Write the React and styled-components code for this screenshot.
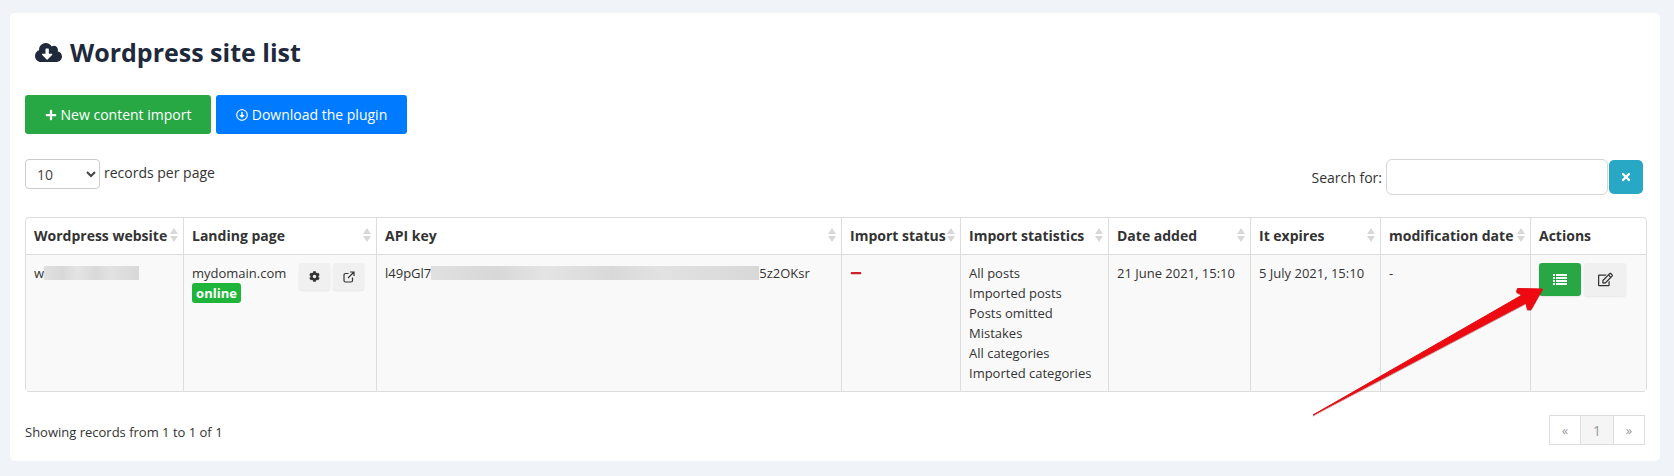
import React from "react";
import styled, { createGlobalStyle } from "styled-components";
import { FaCloudDownloadAlt, FaPlus, FaRegArrowAltCircleDown, FaCog, FaTimes, FaRegEdit, FaMinus } from "react-icons/fa";

const Global = createGlobalStyle`
  html, body { margin: 0; padding: 0; background: #f0f3f8; height: 476px; overflow: hidden; }
  body { font-family: "Open Sans", "Noto Sans", sans-serif; color: #333; font-size: 14px; }
  * { box-sizing: border-box; }
`;
const Page = styled.div`padding: 13px 14px 15px 10px;`;
const Card = styled.main`
  position: relative; background: #fff; border-radius: 5px; height: 448px;
  padding: 25px 15px 16px 15px;
`;
const Title = styled.h1`
  margin: 0 0 28px 10px; height: 29px; display: flex; align-items: center; gap: 8px;
  font-size: 25px; line-height: 29px; font-weight: 700; color: #1e293b;
`;
const Toolbar = styled.div`display: flex; gap: 5px; margin-bottom: 25px;`;
const ActionButton = styled.button`
  width: ${p => p.$w}px; height: 39px; border: 0; border-radius: 3px; color: #fff;
  background: ${p => p.$bg}; font: 14px "Open Sans", sans-serif;
  display: flex; align-items: center; justify-content: center; gap: 4px;
`;
const Controls = styled.div`
  display: flex; justify-content: space-between; align-items: flex-start;
  height: 36px; margin: 0 2px 22px 0;
`;
const PerPage = styled.label`display: flex; align-items: flex-start; gap: 4px; line-height: 28px;`;
const Select = styled.select`
  width: 75px; height: 30px; border: 1px solid #ccc; border-radius: 4px; background: #fff;
  padding-left: 7px; font: 14px "Open Sans", sans-serif; color: #444;
`;
const SearchBox = styled.label`display: flex; align-items: center; height: 36px; gap: 4px;`;
const SearchInput = styled.input`
  width: 222px; height: 36px; border: 1px solid #d5d5d5; border-radius: 6px; background: #fff;
`;
const ClearButton = styled.button`
  width: 34px; height: 34px; margin-left: -3px; border: 0; border-radius: 5px; background: #28a8c4; color: #fff;
  display: flex; align-items: center; justify-content: center; font-size: 12px;
`;
const Table = styled.table`
  width: 1620px; table-layout: fixed; border-collapse: separate; border-spacing: 0;
  border: 1px solid #ddd; border-radius: 4px;
`;
const Th = styled.th`
  height: 37px; padding: 0 8px 2px; text-align: left; font-size: 14px; font-weight: 700; color: #333;
  border-bottom: 1px solid #ddd; border-right: 1px solid #ddd; white-space: nowrap;
  &:last-child { border-right: 0; }
`;
const ThInner = styled.div`display: flex; align-items: center; justify-content: space-between;`;
const Sort = styled.svg`width: 8px; height: 14px; flex: none; margin-right: -3px;`;
const Td = styled.td`
  vertical-align: top; padding: 8px 8px 8px; font-size: 13px; line-height: 20px; background: #f9f9f9; white-space: nowrap;
  border-right: 1px solid #ddd;
  &:last-child { border-right: 0; }
`;
const Redacted = styled.span`
  display: inline-block; width: ${p => p.$w}px; height: 14px; vertical-align: -2px;
  background: linear-gradient(90deg, #e0e0e0 0%, #d8d8d8 20%, #e4e4e4 35%, #d9d9d9 55%, #e2e2e2 70%, #d8d8d8 100%);
`;
const Landing = styled.div`display: flex; justify-content: space-between; padding-right: 4px;`;
const Badge = styled.span`
  display: block; width: 49px; height: 20px; border-radius: 3px; background: #1fb53a; color: #fff;
  font-size: 13px; font-weight: 700; line-height: 20px; text-align: center;
`;
const Buttons = styled.div`display: flex; gap: 3px;`;
const IconButton = styled.button`
  width: ${p => p.$w}px; height: ${p => p.$h}px; border: 0; border-radius: 3px; padding: 0;
  background: ${p => (p.$green ? "#28a745" : "#f0f0f0")}; color: ${p => (p.$green ? "#fff" : "#333")};
  box-shadow: 0 1px 2px rgba(0,0,0,.08); font-size: ${p => p.$size}px;
  display: flex; align-items: center; justify-content: center;
`;
const Line = styled.div`height: 20px;`;
const Footer = styled.div`display: flex; justify-content: space-between; align-items: center; margin-top: 23px; height: 30px; font-size: 13px;`;
const Showing = styled.span`padding-top: 4px;`;
const Pager = styled.div`display: flex;`;
const PageCell = styled.span`
  width: ${p => p.$w}px; height: 30px; border: 1px solid #ddd; margin-left: -1px; color: #999;
  background: ${p => (p.$on ? "#f5f5f5" : "#fff")}; display: flex; align-items: center; justify-content: center;
  font-size: ${p => (p.$on ? 14 : 13)}px;
`;
const Arrow = styled.svg`position: absolute; left: 1290px; top: 260px; width: 260px; height: 150px; overflow: visible;`;

const SortIcon = () => (
  <Sort viewBox="0 0 8 14"><path d="M4 0l4 6H0zM4 14L0 8h8z" fill="#d8d8d8" /></Sort>
);
const heads = [
  ["Wordpress website", 158, 1], ["Landing page", 193, 1], ["API key", 465, 1], ["Import status", 119, 1],
  ["Import statistics", 148, 1], ["Date added", 142, 1], ["It expires", 130, 1], ["modification date", 150, 1], ["Actions", 115, 0],
];
const stats = ["All posts", "Imported posts", "Posts omitted", "Mistakes", "All categories", "Imported categories"];

export default function App() {
  return (
    <Page>
      <Global />
      <Card>
        <Title><FaCloudDownloadAlt size={27} />Wordpress site list</Title>
        <Toolbar>
          <ActionButton $w={186} $bg="#28a745"><FaPlus size={12} />New content import</ActionButton>
          <ActionButton $w={191} $bg="#007bff"><FaRegArrowAltCircleDown size={12} />Download the plugin</ActionButton>
        </Toolbar>
        <Controls>
          <PerPage><Select defaultValue="10"><option>10</option><option>25</option></Select>records per page</PerPage>
          <SearchBox>Search for:<SearchInput /><ClearButton><FaTimes /></ClearButton></SearchBox>
        </Controls>
        <Table>
          <colgroup>{heads.map(h => <col key={h[0]} style={{ width: h[1] }} />)}</colgroup>
          <thead><tr>{heads.map(h => (
            <Th key={h[0]}><ThInner>{h[0]}{h[2] ? <SortIcon /> : null}</ThInner></Th>
          ))}</tr></thead>
          <tbody><tr>
            <Td>w<Redacted $w={95} /></Td>
            <Td>
              <Landing>
                <div>mydomain.com<Badge>online</Badge></div>
                <Buttons>
                  <IconButton $w={31} $h={27} $size={11}><FaCog /></IconButton>
                  <IconButton $w={31} $h={27} $size={12}>
                    <svg width="12" height="12" viewBox="0 0 24 24" fill="none" stroke="currentColor" strokeWidth="2.4"><path d="M19 13v6a3 3 0 0 1-3 3H5a3 3 0 0 1-3-3V8a3 3 0 0 1 3-3h6M14 2h8v8M22 2L10 14" /></svg>
                  </IconButton>
                </Buttons>
              </Landing>
            </Td>
            <Td>l49pGl7<Redacted $w={328} />5z2OKsr</Td>
            <Td><FaMinus color="#d0202e" size={12} style={{ verticalAlign: -1 }} /></Td>
            <Td>{stats.map(s => <Line key={s}>{s}</Line>)}</Td>
            <Td>21 June 2021, 15:10</Td>
            <Td>5 July 2021, 15:10</Td>
            <Td>-</Td>
            <Td>
              <Buttons>
                <IconButton $green $w={42} $h={33} $size={14}>
                  <svg width="14" height="11" viewBox="0 0 14 11" fill="currentColor">
                    <path d="M0 0h2v2H0zM3 0h11v2H3zM0 3h2v2H0zM3 3h11v2H3zM0 6h2v2H0zM3 6h11v2H3zM0 9h2v2H0zM3 9h11v2H3z" />
                  </svg>
                </IconButton>
                <IconButton $w={42} $h={33} $size={15}><FaRegEdit /></IconButton>
              </Buttons>
            </Td>
          </tr></tbody>
        </Table>
        <Footer>
          <Showing>Showing records from 1 to 1 of 1</Showing>
          <Pager>
            <PageCell $w={32}>«</PageCell>
            <PageCell $w={34} $on>1</PageCell>
            <PageCell $w={32}>»</PageCell>
          </Pager>
        </Footer>
        <Arrow viewBox="0 0 260 150">
          <path d="M13 142 L222 22 L216.5 19 L217.5 15.5 L242.5 16 L231 36.5 L227.5 36.5 L226 30 Z" fill="#ee0a10" stroke="#e30b13" strokeWidth="1" strokeLinejoin="round" style={{ filter: "drop-shadow(0 1px 0.5px rgba(120,0,0,.35))" }} />
        </Arrow>
      </Card>
    </Page>
  );
}
